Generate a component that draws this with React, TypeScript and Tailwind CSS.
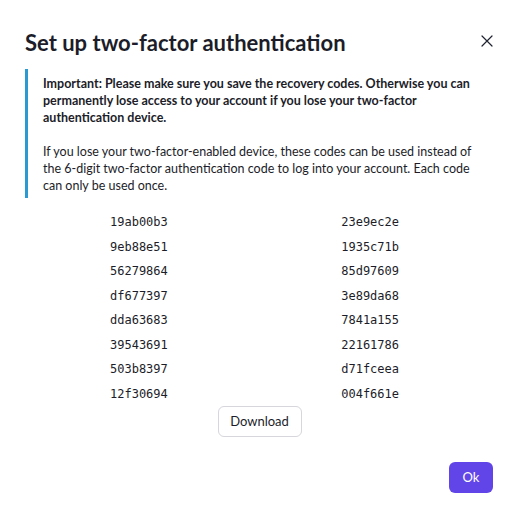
import React from "react";

const codes: [string, string][] = [
  ["19ab00b3", "23e9ec2e"],
  ["9eb88e51", "1935c71b"],
  ["56279864", "85d97609"],
  ["df677397", "3e89da68"],
  ["dda63683", "7841a155"],
  ["39543691", "22161786"],
  ["503b8397", "d71fceea"],
  ["12f30694", "004f661e"],
];

const CloseIcon = () => (
  <svg width="12" height="12" viewBox="0 0 12 12" fill="none">
    <path d="M1 1L11 11M11 1L1 11" stroke="#1f2230" strokeWidth="1.2" strokeLinecap="round" />
  </svg>
);

export default function App() {
  return (
    <div className="h-[516px] w-[519px] bg-white font-['Lato',sans-serif] text-[#1c1d29]">
      <div className="px-[25px] pt-[29px] pb-[24px]">
        {/* Header */}
        <div className="flex items-start justify-between">
          <h2 className="text-[22px] font-bold leading-[28px]">Set up two-factor authentication</h2>
          <button type="button" className="mt-[6px] mr-[1px] p-0" aria-label="Close">
            <CloseIcon />
          </button>
        </div>

        {/* Notice */}
        <div className="mt-[12px] border-l-[3px] border-[#2b9ad2] pt-[6px] pr-[14px] pb-[4px] pl-[15px] text-[12.5px] leading-[17px]">
          <p className="font-bold">
            Important: Please make sure you save the recovery codes. Otherwise you can permanently lose access to your
            account if you lose your two-factor authentication device.
          </p>
          <p className="mt-[17px]">
            If you lose your two-factor-enabled device, these codes can be used instead of the 6-digit two-factor
            authentication code to log into your account. Each code can only be used once.
          </p>
        </div>

        {/* Codes */}
        <div className="mt-[12px] ml-[85px] w-[289px] font-['DejaVu_Sans_Mono',monospace] text-[12px] leading-[24.5px]">
          {codes.map(([a, b]) => (
            <div key={a} className="flex justify-between">
              <span>{a}</span>
              <span>{b}</span>
            </div>
          ))}
        </div>

        <div className="flex justify-center">
          <button
            type="button"
            className="h-[31px] w-[84px] rounded-md border border-[#d6d6dc] bg-white text-[13px] text-[#1c1d29]"
          >
            Download
          </button>
        </div>

        {/* Footer */}
        <div className="mt-[25px] flex justify-end">
          <button
            type="button"
            className="mr-[1px] h-[31px] w-[44px] rounded-md bg-[#6245e8] text-[13px] text-white"
          >
            Ok
          </button>
        </div>
      </div>
    </div>
  );
}
